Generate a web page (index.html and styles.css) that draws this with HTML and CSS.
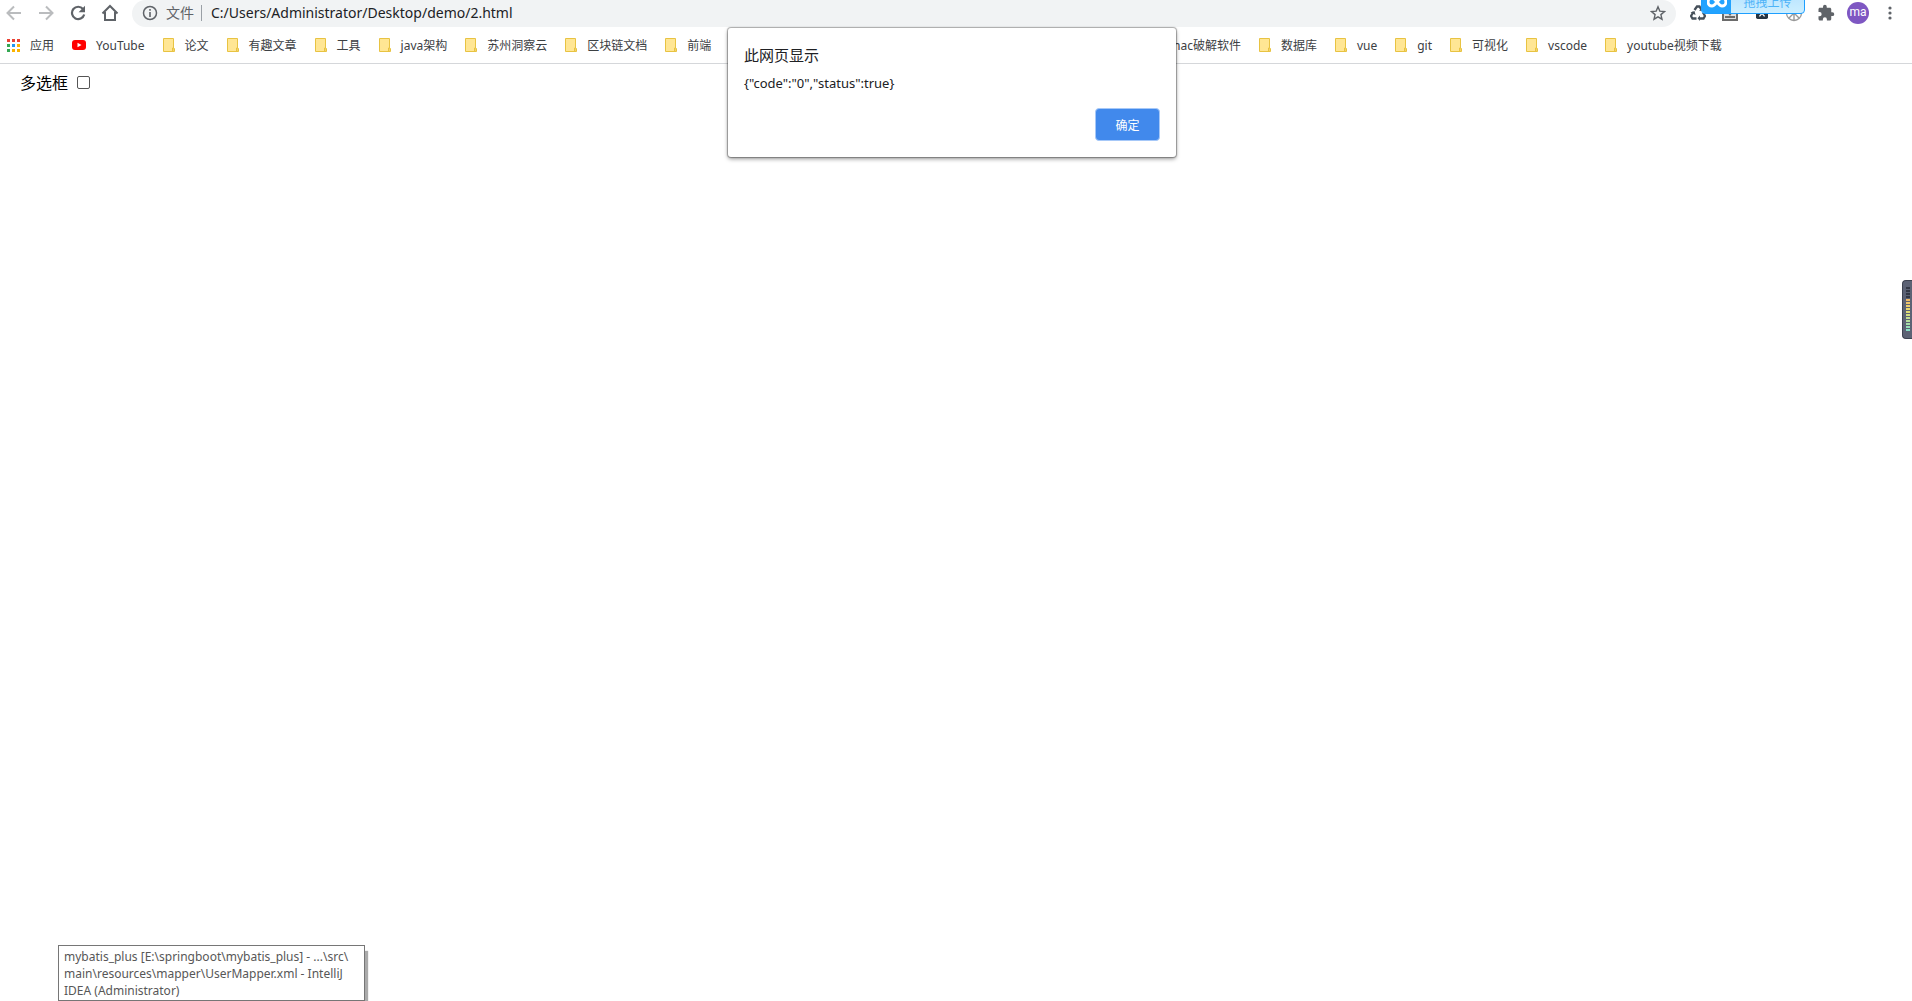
FILE: index.html
```
<!DOCTYPE html>
<html lang="zh-CN">
<head>
    <meta charset="UTF-8">
    <title>2.html</title>
    <link rel="stylesheet" href="styles.css">
</head>
<body>
    <svg class="defs" aria-hidden="true">
        <symbol id="folder" viewBox="0 0 12 14">
            <path d="M.5.5h10v9.500l1 1v2.500H.5z" fill="#ffe694" stroke="#e8c342"/>
            <path d="M9.500 13v-3h1.500v3" fill="#ffe694" stroke="#e8c342"/>
        </symbol>
    </svg>

    <header class="browser">
        <div class="toolbar">
            <nav class="buttons">
                <button class="icon-btn light" aria-label="后退"><svg width="16" height="16" viewBox="0 0 16 16"><path d="M15 8H2M8 1.500L1.500 8 8 14.500" fill="none" stroke="currentColor" stroke-width="2"/></svg></button>
                <button class="icon-btn light" aria-label="前进"><svg width="16" height="16" viewBox="0 0 16 16"><path d="M1 8h13M8 1.500L14.500 8 8 14.500" fill="none" stroke="currentColor" stroke-width="2"/></svg></button>
                <button class="icon-btn" aria-label="刷新"><svg width="16" height="16" viewBox="0 0 16 16"><path d="M13 4a6.200 6.200 0 1 0 1.200 5.500" fill="none" stroke="currentColor" stroke-width="2.200"/><path d="M15 .8v6.400H8.600z" fill="currentColor"/></svg></button>
                <button class="icon-btn" aria-label="主页"><svg width="18" height="18" viewBox="0 0 18 18"><path d="M1.500 9.500L9 2l7.500 7.500M4 8v8h10V8" fill="none" stroke="currentColor" stroke-width="2"/></svg></button>
            </nav>
            <div class="omnibox">
                <svg width="16" height="16" viewBox="0 0 16 16"><circle cx="8" cy="8" r="6.500" fill="none" stroke="#5f6368" stroke-width="1.500"/><path d="M7.200 7h1.600v5H7.200zM7.200 4h1.600v1.700H7.200z" fill="#5f6368"/></svg>
                <span class="scheme">文件</span>
                <input class="url" type="text" aria-label="地址" value="C:/Users/Administrator/Desktop/demo/2.html">
                <button class="icon-btn" aria-label="收藏"><svg width="16" height="16" viewBox="0 0 16 16"><path d="M8 1.800l1.800 4.300 4.700.4-3.600 3.100 1.100 4.600L8 11.800l-4 2.400 1.100-4.600-3.600-3.100 4.700-.4z" fill="none" stroke="currentColor" stroke-width="1.400"/></svg></button>
            </div>
            <div class="buttons">
                <button class="icon-btn" aria-label="扩展"><svg width="16" height="16" viewBox="0 0 16 16"><path d="M4.500 5L7 1.500h2.500L11.500 5M13 7.500l2 3.500-1.500 2.500H9M6.500 13.500H2.500L1 11l2.500-4" fill="none" stroke="#46505a" stroke-width="2.300"/><path d="M9 6l4-.5V2zM10 10.500v5.500L7.500 13.300zM.5 7.500L4.500 6l1 4z" fill="#46505a"/></svg></button>
                <button class="icon-btn" aria-label="下载"><svg width="16" height="16" viewBox="0 0 16 16"><path d="M1 1h14v14H1z" fill="#dedede" stroke="#6b6b6b" stroke-width="2"/><path d="M5 7h6l-3 4z" fill="#666"/><path d="M3 12h10" stroke="#6b6b6b" stroke-width="2"/></svg></button>
                <button class="icon-btn" aria-label="翻译"><svg width="12" height="12" viewBox="0 0 14 14"><rect width="14" height="14" rx="2" fill="#263442"/><path d="M4 4l6 7M10 4l-6 7" stroke="#fff" stroke-width="1.500"/></svg></button>
                <button class="icon-btn" aria-label="代理"><svg width="18" height="18" viewBox="0 0 18 18"><circle cx="9" cy="9" r="7.500" fill="#fff" stroke="#999" stroke-width="1.300"/><path d="M9 2v14M3 8h12M9 9l-5 5M9 9l5 5" stroke="#999" fill="none" stroke-width="1.400"/></svg></button>
                <button class="icon-btn" aria-label="扩展程序"><svg width="18" height="18" viewBox="0 0 24 24"><path d="M20.500 11H19V7c0-1.100-.9-2-2-2h-4V3.500a2.500 2.500 0 0 0-5 0V5H4c-1.100 0-2 .9-2 2v3.800h1.500a2.700 2.700 0 0 1 0 5.400H2V20c0 1.100.9 2 2 2h3.800v-1.500a2.700 2.700 0 0 1 5.400 0V22H17c1.100 0 2-.9 2-2v-4h1.500a2.500 2.500 0 0 0 0-5z" fill="currentColor"/></svg></button>
                <button class="icon-btn" aria-label="用户"><span class="avatar">ma</span></button>
                <button class="icon-btn" aria-label="菜单"><svg width="4" height="14" viewBox="0 0 4 14" fill="currentColor"><circle cx="2" cy="2" r="1.600"/><circle cx="2" cy="7" r="1.600"/><circle cx="2" cy="12" r="1.600"/></svg></button>
            </div>
        </div>

        <nav class="bookmarks">
            <div class="group">
                <a href="#"><svg width="13" height="13" viewBox="0 0 13 13"><path d="M0 0h3v3H0zM5 0h3v3H5zM10 0h3v3h-3z" fill="#ea4335"/><path d="M0 5h3v3H0zM0 10h3v3H0z" fill="#34a853"/><path d="M5 5h3v3H5z" fill="#2196f3"/><path d="M10 5h3v3h-3zM5 10h3v3H5zM10 10h3v3h-3z" fill="#fbb300"/></svg>应用</a>
                <a href="#"><svg width="14" height="12" viewBox="0 0 14 12"><rect y="1" width="14" height="10" rx="3" fill="#f00"/><path d="M5.500 3.800v4.400L9.500 6z" fill="#fff"/></svg>YouTube</a>
                <a href="#"><svg width="12" height="14"><use href="#folder"/></svg>论文</a>
                <a href="#"><svg width="12" height="14"><use href="#folder"/></svg>有趣文章</a>
                <a href="#"><svg width="12" height="14"><use href="#folder"/></svg>工具</a>
                <a href="#"><svg width="12" height="14"><use href="#folder"/></svg>java架构</a>
                <a href="#"><svg width="12" height="14"><use href="#folder"/></svg>苏州洞察云</a>
                <a href="#"><svg width="12" height="14"><use href="#folder"/></svg>区块链文档</a>
                <a href="#"><svg width="12" height="14"><use href="#folder"/></svg>前端</a>
            </div>
            <div class="group">
                <a href="#"><svg width="12" height="14"><use href="#folder"/></svg>mac破解软件</a>
                <a href="#"><svg width="12" height="14"><use href="#folder"/></svg>数据库</a>
                <a href="#"><svg width="12" height="14"><use href="#folder"/></svg>vue</a>
                <a href="#"><svg width="12" height="14"><use href="#folder"/></svg>git</a>
                <a href="#"><svg width="12" height="14"><use href="#folder"/></svg>可视化</a>
                <a href="#"><svg width="12" height="14"><use href="#folder"/></svg>vscode</a>
                <a href="#"><svg width="12" height="14"><use href="#folder"/></svg>youtube视频下载</a>
            </div>
        </nav>
    </header>

    <main class="page">
        <label for="check">多选框</label>
        <input type="checkbox" id="check">
    </main>

    <!-- 弹窗 -->
    <div class="alert" role="alertdialog" aria-labelledby="alertTitle">
        <h1 id="alertTitle">此网页显示</h1>
        <p>{"code":"0","status":true}</p>
        <button class="ok">确定</button>
    </div>

    <!-- 拖拽上传 -->
    <div class="upload">
        <span class="upload-icon"><svg width="20" height="12" viewBox="0 0 20 12"><path d="M10 6C8 3.500 7 2 5 2a4 4 0 0 0 0 8c2 0 3-1.500 5-4s3-4 5-4a4 4 0 0 1 0 8c-2 0-3-1.500-5-4z" fill="none" stroke="#fff" stroke-width="3"/></svg></span>
        <span class="upload-text">拖拽上传</span>
    </div>

    <div class="meter"></div>

    <div class="tooltip">mybatis_plus [E:\springboot\mybatis_plus] - ...\src\<br>main\resources\mapper\UserMapper.xml - IntelliJ<br>IDEA (Administrator)</div>
</body>
</html>
```
FILE: styles.css
```
* {
    box-sizing: border-box;
}

body {
    position: relative;
    min-height: 100vh;
    margin: 0;
    overflow: hidden;
    background: #fff;
    color: #000;
    font-family: "Noto Sans", "Noto Sans CJK SC", sans-serif;
}

button {
    font-family: inherit;
    cursor: pointer;
}

.defs {
    position: absolute;
    width: 0;
    height: 0;
}

/* 工具栏 */
.browser {
    border-bottom: 1px solid #d5d7da;
}

.toolbar {
    display: flex;
    align-items: center;
    gap: 8px;
    height: 27px;
    padding-right: 8px;
}

.buttons {
    display: flex;
    gap: 4px;
}

.icon-btn {
    display: flex;
    align-items: center;
    justify-content: center;
    width: 28px;
    height: 26px;
    padding: 0;
    border: none;
    background: none;
    color: #5f6368;
}

.toolbar .icon-btn {
    padding-bottom: 1px;
}

.icon-btn.light {
    color: #babcbe;
}

.omnibox {
    display: flex;
    flex: 1;
    align-items: center;
    height: 27px;
    padding: 0 4px 1px 10px;
    border-radius: 14px;
    background: #f1f3f4;
}

.scheme {
    margin-left: 8px;
    padding-right: 7px;
    border-right: 1px solid #9aa0a6;
    color: #5f6368;
    font-size: 14px;
    line-height: 16px;
}

.url {
    flex: 1;
    height: 24px;
    margin-left: 9px;
    padding: 0 0 2px;
    border: none;
    outline: none;
    background: none;
    color: #202124;
    font-family: "Noto Sans", sans-serif;
    font-size: 14px;
}

.avatar {
    width: 22px;
    height: 22px;
    border-radius: 50%;
    background: #7e57c2;
    color: #fff;
    font-family: Roboto, sans-serif;
    font-size: 12px;
    line-height: 21px;
}

/* 书签栏 */
.bookmarks {
    display: grid;
    grid-template-columns: 60% auto;
    height: 36px;
}

.group {
    display: flex;
    align-items: center;
    gap: 18px;
}

.group:first-child {
    padding-left: 7px;
}

.bookmarks a {
    display: flex;
    align-items: center;
    gap: 10px;
    color: #3c4043;
    font-size: 12px;
    white-space: nowrap;
    text-decoration: none;
}

/* 页面内容 */
.page {
    display: flex;
    align-items: center;
    gap: 9px;
    padding: 6px 20px;
    font-size: 16px;
}

.page input {
    width: 13px;
    height: 13px;
    margin: 0;
    border: 1px solid #555;
    border-radius: 2px;
    background: #fff;
    appearance: none;
}

.page input:checked {
    background: #4189ec;
}

.alert {
    position: absolute;
    top: 28px;
    left: 728px;
    display: flex;
    flex-direction: column;
    width: 448px;
    padding: 16px;
    border-radius: 3px;
    background: #fff;
    box-shadow: 0 0 1px 1px rgba(0, 0, 0, 0.3), 0 2px 4px rgba(0, 0, 0, 0.4);
    color: #202124;
}

.alert h1 {
    margin: 0;
    font-size: 15px;
    font-weight: normal;
    line-height: 22px;
}

.alert p {
    margin: 8px 0 16px;
    font-size: 13px;
    line-height: 18px;
}

.ok {
    align-self: flex-end;
    width: 65px;
    height: 33px;
    border: 1px solid #a6c8f8;
    border-radius: 4px;
    background: #4189ec;
    color: #fff;
    font-size: 12px;
}

.upload {
    position: absolute;
    top: -10px;
    right: 107px;
    display: flex;
    width: 104px;
    height: 24px;
    border: 1px solid #1e9fff;
    border-radius: 4px;
    overflow: hidden;
    background: linear-gradient(#b5e2ff, #cdefff);
}

.upload-icon {
    display: flex;
    align-items: center;
    justify-content: center;
    width: 29px;
    background: #22a3ff;
}

.upload-text {
    flex: 1;
    color: #4db3f8;
    font-size: 12px;
    line-height: 24px;
    text-align: center;
}

.meter {
    position: absolute;
    top: 280px;
    right: 0;
    width: 10px;
    height: 59px;
    padding: 6px 2px 6px 3px;
    border: 1px solid #3d4250;
    border-right: none;
    border-radius: 4px 0 0 4px;
    background: #5c6274;
}

.meter::before {
    content: "";
    display: block;
    height: 45px;
    background:
        repeating-linear-gradient(transparent 0 2px, #5c6274 2px 3px),
        linear-gradient(#333845 0 12px, #f2b866 12px, #e6dc70 24px, #7de0cc 45px);
}

.tooltip {
    position: absolute;
    bottom: 0;
    left: 58px;
    min-width: 307px;
    padding: 2px 5px 1px;
    border: 1px solid #767676;
    background: #fff;
    box-shadow: 3px 6px 1px #aaa;
    color: #575757;
    font-size: 12px;
    line-height: 17px;
    white-space: nowrap;
}
```
